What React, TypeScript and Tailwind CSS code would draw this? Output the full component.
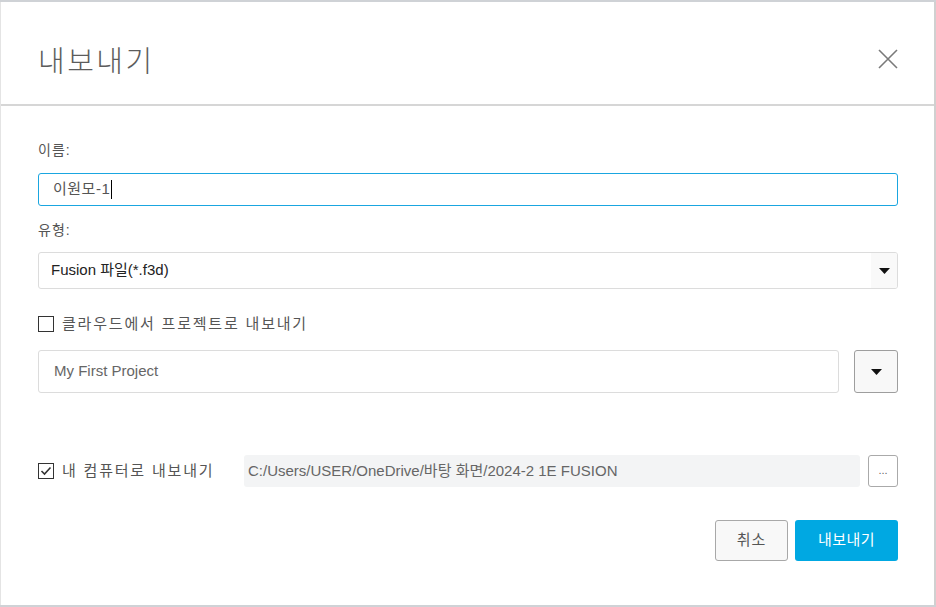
const Caret = () => (
  <svg width="11" height="6" viewBox="0 0 11 6">
    <path d="M0 0 H11 L5.5 6 Z" fill="#111" />
  </svg>
);

const CheckBox = ({ checked }: { checked: boolean }) => (
  <div className="flex h-[16px] w-[16px] items-center justify-center border-[1.5px] border-[#333] bg-white">
    {checked && (
      <svg width="12" height="10" viewBox="0 0 12 10">
        <path d="M1.5 5 L4.5 8 L10.5 1.5" fill="none" stroke="#333" strokeWidth="1.6" />
      </svg>
    )}
  </div>
);

const App = () => {
  return (
    <div
      className="flex h-[607px] w-[936px] flex-col bg-[#cfd2d6] pt-[2px] pb-[2px]"
      style={{ fontFamily: '"Liberation Sans", "Noto Sans CJK KR", sans-serif' }}
    >
      <div className="flex flex-1 flex-col border-l border-r-2 border-l-[#e4e4e4] border-r-[#d0d0d0] bg-white">
        {/* header */}
        <div className="flex h-[104px] items-center justify-between border-b-2 border-[#d6d6d6] pl-[37px] pr-[36px]">
          <div
            className="mt-[12px] text-[29px] font-light leading-none tracking-[2.5px] text-[#5c5c5c]"
            style={{ fontFamily: '"Noto Sans CJK KR", sans-serif' }}
          >
            내보내기
          </div>
          <svg width="20" height="20" viewBox="0 0 20 20" className="mt-[12px]">
            <path d="M1 1 L19 19 M19 1 L1 19" stroke="#7a7a7a" strokeWidth="1.6" />
          </svg>
        </div>

        {/* body */}
        <div className="flex flex-col pl-[37px] pr-[36px] pt-[34px]">
          <div className="h-[20px] text-[14px] leading-[20px] tracking-[1px] text-[#555]">이름:</div>
          <div className="mt-[13px] flex h-[33px] items-center rounded-[3px] border border-[#1aa6e0] px-[14px] text-[15px] tracking-[0.5px] text-[#555]">
            이원모-1
            <span className="ml-[1px] inline-block h-[19px] w-[1px] bg-black" />
          </div>

          <div className="mt-[14px] h-[20px] text-[14px] leading-[20px] tracking-[1px] text-[#555]">유형:</div>
          <div className="mt-[12px] flex h-[37px] items-stretch overflow-hidden rounded-[3px] border border-[#dcdcdc]">
            <div className="flex flex-1 items-center pl-[12px] text-[15px] text-[#222]">Fusion 파일(*.f3d)</div>
            <div className="flex w-[26px] items-center justify-center bg-[#f9f9f9]">
              <Caret />
            </div>
          </div>

          <div className="mt-[25px] flex h-[20px] items-center gap-[8px]">
            <CheckBox checked={false} />
            <span className="text-[15px] tracking-[1.8px] text-[#555]">클라우드에서 프로젝트로 내보내기</span>
          </div>

          <div className="mt-[16px] flex h-[43px] gap-[15px]">
            <div className="flex flex-1 items-center rounded-[3px] border border-[#dcdcdc] pl-[15px] text-[15px] text-[#666]">
              My First Project
            </div>
            <div className="flex w-[44px] items-center justify-center rounded-[3px] border border-[#9e9e9e] bg-[#f8f8f8]">
              <Caret />
            </div>
          </div>

          <div className="mt-[62px] flex h-[32px] items-center">
            <div className="flex w-[206px] items-center gap-[8px]">
              <CheckBox checked={true} />
              <span className="text-[15px] tracking-[1.8px] text-[#555]">내 컴퓨터로 내보내기</span>
            </div>
            <div className="flex h-full flex-1 items-center rounded-[3px] bg-[#f3f4f5] pl-[4px] text-[15px] text-[#666]">
              C:/Users/USER/OneDrive/바탕 화면/2024-2 1E FUSION
            </div>
            <div className="ml-[8px] flex h-full w-[30px] items-center justify-center rounded-[3px] border border-[#aaa] bg-white pb-[2px] text-[11px] text-[#666]">
              ...
            </div>
          </div>

          <div className="mt-[33px] flex justify-end gap-[7px]">
            <button className="h-[41px] w-[73px] rounded-[3px] border border-[#a8a8a8] bg-[#f8f8f8] text-[15px] tracking-[1px] text-[#555]">
              취소
            </button>
            <button className="h-[41px] w-[103px] rounded-[3px] bg-[#00a8e2] text-[15px] tracking-[0.5px] text-white">
              내보내기
            </button>
          </div>
        </div>
      </div>
    </div>
  );
};

export default App;
